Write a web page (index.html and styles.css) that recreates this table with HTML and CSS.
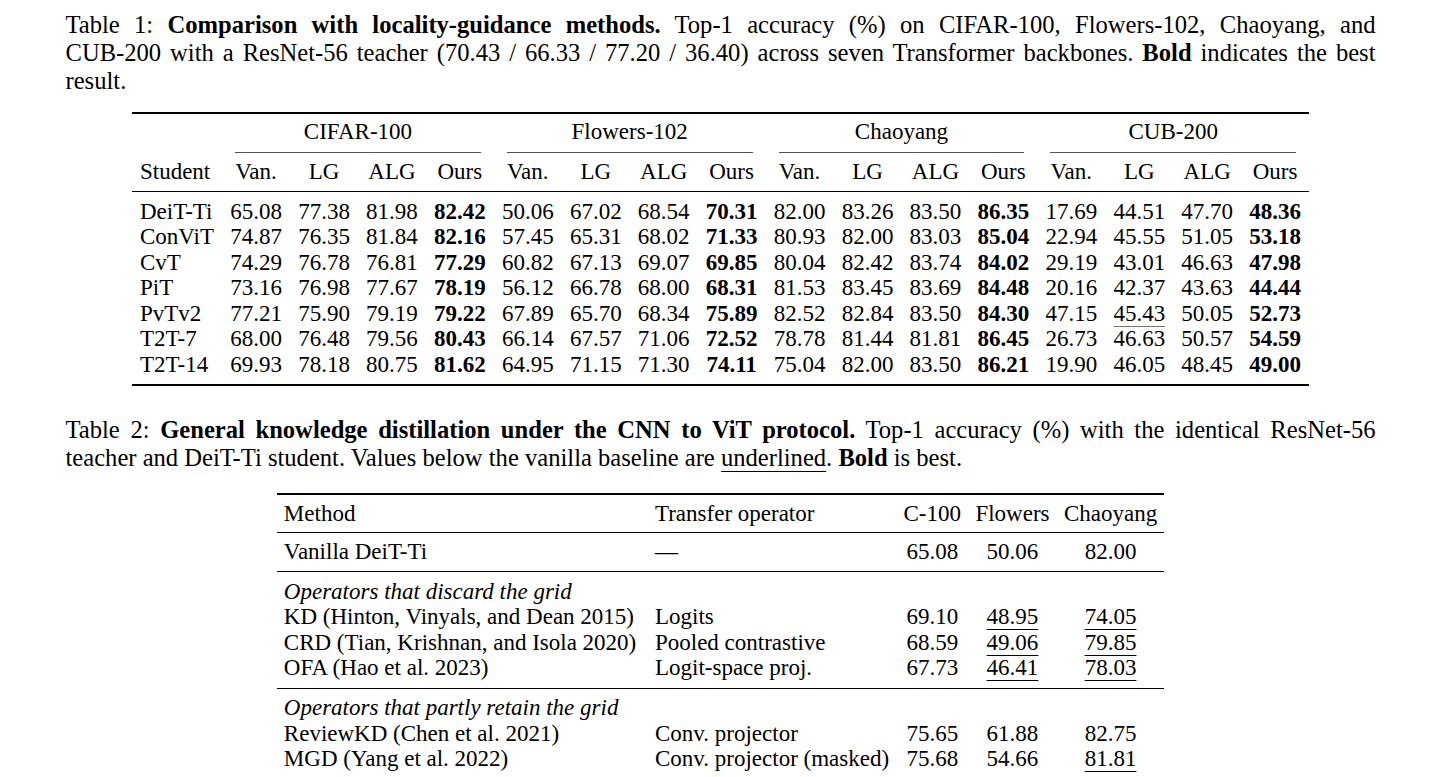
FILE: index.html
```html
<!DOCTYPE html>
<html lang="en">
<head>
    <meta charset="UTF-8">
    <meta name="viewport" content="width=device-width, initial-scale=1.0">
    <title>Tables</title>
    <link rel="stylesheet" href="styles.css">
</head>
<body>
    <div class="page">
        <p class="caption">
            <span class="line">Table 1: <strong>Comparison with locality-guidance methods.</strong> Top-1 accuracy (%) on CIFAR-100, Flowers-102, Chaoyang, and</span>
            <span class="line">CUB-200 with a ResNet-56 teacher (70.43 / 66.33 / 77.20 / 36.40) across seven Transformer backbones. <strong>Bold</strong> indicates the best</span>
            <span class="last">result.</span>
        </p>

        <table class="results">
            <thead>
                <tr class="groups">
                    <th></th>
                    <th colspan="4"><div class="group">CIFAR-100</div></th>
                    <th colspan="4"><div class="group">Flowers-102</div></th>
                    <th colspan="4"><div class="group">Chaoyang</div></th>
                    <th colspan="4"><div class="group">CUB-200</div></th>
                </tr>
                <tr class="heads">
                    <th class="name">Student</th>
                    <th>Van.</th><th>LG</th><th>ALG</th><th>Ours</th>
                    <th>Van.</th><th>LG</th><th>ALG</th><th>Ours</th>
                    <th>Van.</th><th>LG</th><th>ALG</th><th>Ours</th>
                    <th>Van.</th><th>LG</th><th>ALG</th><th>Ours</th>
                </tr>
            </thead>
            <tbody>
                <tr>
                    <td class="name">DeiT-Ti</td>
                    <td>65.08</td><td>77.38</td><td>81.98</td><td><b>82.42</b></td>
                    <td>50.06</td><td>67.02</td><td>68.54</td><td><b>70.31</b></td>
                    <td>82.00</td><td>83.26</td><td>83.50</td><td><b>86.35</b></td>
                    <td>17.69</td><td>44.51</td><td>47.70</td><td><b>48.36</b></td>
                </tr>
                <tr>
                    <td class="name">ConViT</td>
                    <td>74.87</td><td>76.35</td><td>81.84</td><td><b>82.16</b></td>
                    <td>57.45</td><td>65.31</td><td>68.02</td><td><b>71.33</b></td>
                    <td>80.93</td><td>82.00</td><td>83.03</td><td><b>85.04</b></td>
                    <td>22.94</td><td>45.55</td><td>51.05</td><td><b>53.18</b></td>
                </tr>
                <tr>
                    <td class="name">CvT</td>
                    <td>74.29</td><td>76.78</td><td>76.81</td><td><b>77.29</b></td>
                    <td>60.82</td><td>67.13</td><td>69.07</td><td><b>69.85</b></td>
                    <td>80.04</td><td>82.42</td><td>83.74</td><td><b>84.02</b></td>
                    <td>29.19</td><td>43.01</td><td>46.63</td><td><b>47.98</b></td>
                </tr>
                <tr>
                    <td class="name">PiT</td>
                    <td>73.16</td><td>76.98</td><td>77.67</td><td><b>78.19</b></td>
                    <td>56.12</td><td>66.78</td><td>68.00</td><td><b>68.31</b></td>
                    <td>81.53</td><td>83.45</td><td>83.69</td><td><b>84.48</b></td>
                    <td>20.16</td><td>42.37</td><td>43.63</td><td><b>44.44</b></td>
                </tr>
                <tr>
                    <td class="name">PvTv2</td>
                    <td>77.21</td><td>75.90</td><td>79.19</td><td><b>79.22</b></td>
                    <td>67.89</td><td>65.70</td><td>68.34</td><td><b>75.89</b></td>
                    <td>82.52</td><td>82.84</td><td>83.50</td><td><b>84.30</b></td>
                    <td>47.15</td><td><u class="faint">45.43</u></td><td>50.05</td><td><b>52.73</b></td>
                </tr>
                <tr>
                    <td class="name">T2T-7</td>
                    <td>68.00</td><td>76.48</td><td>79.56</td><td><b>80.43</b></td>
                    <td>66.14</td><td>67.57</td><td>71.06</td><td><b>72.52</b></td>
                    <td>78.78</td><td>81.44</td><td>81.81</td><td><b>86.45</b></td>
                    <td>26.73</td><td>46.63</td><td>50.57</td><td><b>54.59</b></td>
                </tr>
                <tr>
                    <td class="name">T2T-14</td>
                    <td>69.93</td><td>78.18</td><td>80.75</td><td><b>81.62</b></td>
                    <td>64.95</td><td>71.15</td><td>71.30</td><td><b>74.11</b></td>
                    <td>75.04</td><td>82.00</td><td>83.50</td><td><b>86.21</b></td>
                    <td>19.90</td><td>46.05</td><td>48.45</td><td><b>49.00</b></td>
                </tr>
            </tbody>
        </table>

        <p class="caption second">
            <span class="line">Table 2: <strong>General knowledge distillation under the CNN to ViT protocol.</strong> Top-1 accuracy (%) with the identical ResNet-56</span>
            <span class="last">teacher and DeiT-Ti student. Values below the vanilla baseline are <u>underlined</u>. <strong>Bold</strong> is best.</span>
        </p>

        <table class="methods">
            <thead>
                <tr>
                    <th class="left first">Method</th>
                    <th class="left">Transfer operator</th>
                    <th>C-100</th>
                    <th>Flowers</th>
                    <th>Chaoyang</th>
                </tr>
            </thead>
            <tbody class="base">
                <tr>
                    <td class="left first">Vanilla DeiT-Ti</td>
                    <td class="left">&mdash;</td>
                    <td>65.08</td><td>50.06</td><td>82.00</td>
                </tr>
            </tbody>
            <tbody class="block">
                <tr>
                    <td class="left section" colspan="5">Operators that discard the grid</td>
                </tr>
                <tr>
                    <td class="left first">KD (Hinton, Vinyals, and Dean 2015)</td>
                    <td class="left">Logits</td>
                    <td>69.10</td><td><u>48.95</u></td><td><u>74.05</u></td>
                </tr>
                <tr>
                    <td class="left first">CRD (Tian, Krishnan, and Isola 2020)</td>
                    <td class="left">Pooled contrastive</td>
                    <td>68.59</td><td><u>49.06</u></td><td><u>79.85</u></td>
                </tr>
                <tr>
                    <td class="left first">OFA (Hao et al. 2023)</td>
                    <td class="left">Logit-space proj.</td>
                    <td>67.73</td><td><u>46.41</u></td><td><u>78.03</u></td>
                </tr>
            </tbody>
            <tbody class="block">
                <tr>
                    <td class="left section" colspan="5">Operators that partly retain the grid</td>
                </tr>
                <tr>
                    <td class="left first">ReviewKD (Chen et al. 2021)</td>
                    <td class="left">Conv. projector</td>
                    <td>75.65</td><td>61.88</td><td>82.75</td>
                </tr>
                <tr>
                    <td class="left first">MGD (Yang et al. 2022)</td>
                    <td class="left">Conv. projector (masked)</td>
                    <td>75.68</td><td>54.66</td><td><u>81.81</u></td>
                </tr>
            </tbody>
        </table>
    </div>
</body>
</html>
```

FILE: styles.css
```css
body {
    margin: 0;
    background: #fff;
    color: #000;
    font-family: "Liberation Serif", "Times New Roman", serif;
    font-size: 23px;
}
.page {
    width: 1310px;
    margin: 0 auto;
    padding-top: 11px;
}
.caption {
    margin: 0;
    font-size: 24.6px;
    line-height: 28px;
}
.caption .line {
    display: block;
    white-space: nowrap;
    text-align: justify;
    text-align-last: justify;
}
.caption .last {
    display: block;
}
.caption.second {
    margin-top: 30px;
}
u {
    text-decoration-thickness: 1px;
    text-underline-offset: 5px;
}
u.faint {
    text-decoration-color: #777;
}

/* table 1 */
.results {
    margin: 17px auto 0;
    border-collapse: collapse;
    border-top: 2px solid #000;
    border-bottom: 2px solid #000;
    line-height: 25.5px;
}
.results th,
.results td {
    padding: 0 8.1px;
    text-align: center;
    font-weight: normal;
    white-space: nowrap;
}
.results .name {
    text-align: left;
}
.results .groups th {
    padding: 5px 0 0;
}
.group {
    margin: 0 13px;
    padding-bottom: 7px;
    border-bottom: 1px solid #555;
}
.results .heads th {
    padding-top: 6.5px;
    padding-bottom: 6px;
    border-bottom: 1px solid #000;
}
.results tbody tr:first-child td {
    padding-top: 7px;
}
.results tbody tr:last-child td {
    padding-bottom: 6.5px;
}

/* table 2 */
.methods {
    margin: 21px auto 0;
    border-collapse: collapse;
    border-top: 2px solid #000;
    line-height: 25.5px;
}
.methods th,
.methods td {
    padding: 0 7.2px;
    text-align: center;
    font-weight: normal;
    white-space: nowrap;
}
.methods .left {
    text-align: left;
}
.methods .first {
    padding-right: 11.5px;
}
.methods thead th {
    padding-top: 6px;
    padding-bottom: 6px;
    border-bottom: 1px solid #000;
}
.methods .base td {
    padding-top: 6px;
    padding-bottom: 6.5px;
    border-bottom: 1px solid #000;
}
.methods .block tr:first-child td {
    padding-top: 6.5px;
}
.methods .block tr:last-child td {
    padding-bottom: 7px;
    border-bottom: 1px solid #000;
}
.methods .block:last-child tr:last-child td {
    border-bottom: none;
}
.section {
    font-style: italic;
}
```
